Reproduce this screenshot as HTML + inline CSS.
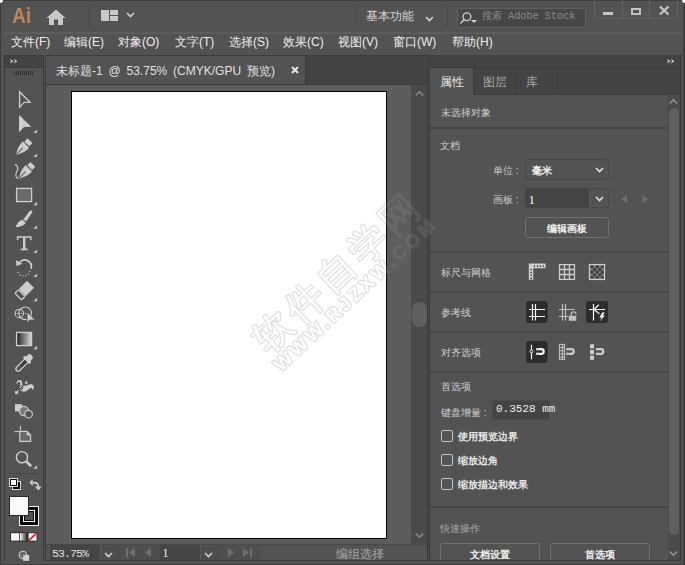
<!DOCTYPE html>
<html><head><meta charset="utf-8">
<style>
*{margin:0;padding:0;box-sizing:border-box}
html,body{width:685px;height:565px;overflow:hidden;background:#535353}
body{position:relative;font-family:"Liberation Sans",sans-serif;color:#d6d6d6}
.a{position:absolute}
.t{position:absolute;white-space:nowrap;line-height:1}
svg{position:absolute;overflow:visible}
</style></head><body>
<!-- window frame -->
<div class="a" style="left:0;top:0;width:685px;height:565px;background:#535353"></div>
<div class="a" style="left:0;top:0;width:1px;height:565px;background:#3d3d3d"></div>
<div class="a" style="left:0;top:0;width:685px;height:1px;background:#3d3d3d"></div>
<div class="a" style="left:0;top:0;width:3px;height:3px;background:#fff;border-bottom-right-radius:3px"></div>
<div class="a" style="left:683px;top:0;width:1px;height:565px;background:#464646"></div>
<div class="a" style="left:684px;top:0;width:1px;height:565px;background:#3a3a3a"></div>
<div class="a" style="left:682px;top:0;width:3px;height:3px;background:#fff;border-bottom-left-radius:3px"></div>
<div class="a" style="left:4px;top:32px;width:677px;height:2px;background:#5c5c5c"></div>

<!-- title bar -->
<div class="t" style="left:11.5px;top:5.5px;font-size:21.5px;font-weight:bold;color:#c08459;transform:scaleX(0.88);transform-origin:0 0">Ai</div>
<svg style="left:46px;top:9px" width="20" height="17" viewBox="0 0 20 17"><path d="M10 0.5 L19.5 9 L17 9 L17 16 L12 16 L12 10.5 L8 10.5 L8 16 L3 16 L3 9 L0.5 9 Z" fill="#c8c8c8"/></svg>
<div class="a" style="left:89px;top:7px;width:1px;height:20px;background:#484848"></div>
<div class="a" style="left:101px;top:10px;width:8px;height:11px;background:#c8c8c8"></div>
<div class="a" style="left:110px;top:10px;width:8px;height:5px;background:#c8c8c8"></div>
<div class="a" style="left:110px;top:16px;width:8px;height:5px;background:#c8c8c8"></div>
<svg style="left:126px;top:12px" width="9" height="6" viewBox="0 0 9 6"><path d="M1 1 L4.5 4.5 L8 1" stroke="#d0d0d0" stroke-width="1.6" fill="none"/></svg>
<div class="a" style="left:355px;top:7px;width:1px;height:20px;background:#484848"></div>
<div class="t" style="left:366px;top:10px;font-size:12px;color:#d8d8d8">基本功能</div>
<svg style="left:425px;top:15.5px" width="9" height="6" viewBox="0 0 9 6"><path d="M1 1 L4.5 4.5 L8 1" stroke="#d0d0d0" stroke-width="1.6" fill="none"/></svg>
<div class="a" style="left:447px;top:7px;width:1px;height:20px;background:#484848"></div>
<div class="a" style="left:456.5px;top:7.5px;width:129px;height:20px;background:#474747;border:1px solid #606060;border-radius:3px"></div>
<svg style="left:455px;top:5.5px" width="30" height="25" viewBox="0 0 30 25"><circle cx="11.9" cy="10.8" r="3.9" stroke="#cfcfcf" stroke-width="1.3" fill="none"/><path d="M9.2 13.6 L5.9 17" stroke="#cfcfcf" stroke-width="1.5" stroke-linecap="round"/><path d="M15.9 13.9 H22.1 L19 16.9 Z" fill="#cfcfcf"/></svg>
<div class="t" style="left:482px;top:12px;font-size:10.2px;color:#8c8c8c;font-family:'Liberation Mono',monospace">搜索 Adobe Stock</div>
<div class="a" style="left:594px;top:-3px;width:84px;height:22px;border:1px solid #626262;border-radius:0 0 4px 4px"></div>
<div class="a" style="left:622px;top:0;width:1px;height:19px;background:#626262"></div>
<div class="a" style="left:649px;top:0;width:1px;height:19px;background:#626262"></div>
<div class="a" style="left:603px;top:12px;width:10px;height:3px;background:#c4c4c4"></div>
<div class="a" style="left:631px;top:7.5px;width:10px;height:7.5px;border:2px solid #c4c4c4"></div>
<svg style="left:658.5px;top:5.5px" width="11" height="9" viewBox="0 0 11 9"><path d="M1 0.5 L9.5 8.5 M9.5 0.5 L1 8.5" stroke="#c4c4c4" stroke-width="2.4"/></svg>

<!-- menu bar -->
<div class="t" style="left:11px;top:36px;font-size:12px;color:#ededed">文件(F)</div>
<div class="t" style="left:64px;top:36px;font-size:12px;color:#ededed">编辑(E)</div>
<div class="t" style="left:118px;top:36px;font-size:12px;color:#ededed">对象(O)</div>
<div class="t" style="left:175px;top:36px;font-size:12px;color:#ededed">文字(T)</div>
<div class="t" style="left:229px;top:36px;font-size:12px;color:#ededed">选择(S)</div>
<div class="t" style="left:283px;top:36px;font-size:12px;color:#ededed">效果(C)</div>
<div class="t" style="left:338px;top:36px;font-size:12px;color:#ededed">视图(V)</div>
<div class="t" style="left:393px;top:36px;font-size:12px;color:#ededed">窗口(W)</div>
<div class="t" style="left:452px;top:36px;font-size:12px;color:#ededed">帮助(H)</div>

<!-- TOOLS PANEL -->
<div class="a" style="left:4px;top:55px;width:40px;height:506px;background:#535353;border:1px solid #3b3b3b;border-bottom:none"></div>
<div class="a" style="left:5px;top:56px;width:38px;height:11px;background:#434343"></div>
<div class="a" style="left:5px;top:67px;width:38px;height:1px;background:#3b3b3b"></div>
<svg style="left:9.8px;top:59.3px" width="8" height="6" viewBox="0 0 8 6"><path d="M0 0 L3.6 2.3 L0 4.6 L1.1 2.3 Z M3.9 0 L7.5 2.3 L3.9 4.6 L5 2.3 Z" fill="#d0d0d0"/></svg>
<svg style="left:14px;top:71px" width="20" height="4" viewBox="0 0 20 4"><path d="M0.5 0 V4 M2.5 0 V4 M4.5 0 V4 M6.5 0 V4 M8.5 0 V4 M10.5 0 V4 M12.5 0 V4 M14.5 0 V4 M16.5 0 V4 M18.5 0 V4" stroke="#2e2e2e" stroke-width="1"/></svg>

<svg style="left:0;top:0" width="48" height="565" viewBox="0 0 48 565">
<g fill="#cdcdcd">
<!-- flyout triangles -->
<path d="M37 129.5 V133 H33.5 Z"/>
<path d="M37 153.5 V157 H33.5 Z"/>
<path d="M37 201.7 V205.2 H33.5 Z"/>
<path d="M37 225.3 V228.8 H33.5 Z"/>
<path d="M37 249.5 V253 H33.5 Z"/>
<path d="M37 273.5 V277 H33.5 Z"/>
<path d="M37 297.8 V301.3 H33.5 Z"/>
<path d="M37 345.7 V349.2 H33.5 Z"/>
<path d="M37 465.3 V468.8 H33.5 Z"/>
</g>
<!-- selection -->
<path d="M19.6 91.8 L30 102.2 L24.2 102.4 L19.6 107.2 Z" fill="none" stroke="#cdcdcd" stroke-width="1.3" stroke-linejoin="miter"/>
<!-- direct selection -->
<path d="M19 115 L31.2 126.7 L24 127 L19 132.3 Z" fill="#cdcdcd"/>
<!-- pen -->
<g transform="translate(22.4,148.3) rotate(45) scale(1.08)">
<rect x="-3.2" y="-10" width="6.4" height="4.2" rx="0.6" fill="#cdcdcd"/>
<path d="M-4 -4.8 H4 C4.5 0 2.5 4 0 8.8 C-2.5 4 -4.5 0 -4 -4.8 Z" fill="#cdcdcd"/>
<path d="M0 -0.5 V8.8" stroke="#535353" stroke-width="0.9"/>
</g>
<!-- curvature -->
<g transform="translate(25.2,172) rotate(45) scale(1.08)">
<rect x="-3.2" y="-10" width="6.4" height="4.2" rx="0.6" fill="#cdcdcd"/>
<path d="M-4 -4.8 H4 C4.5 0 2.5 4 0 8.8 C-2.5 4 -4.5 0 -4 -4.8 Z" fill="#cdcdcd"/>
<path d="M0 -0.5 V8.8" stroke="#535353" stroke-width="0.9"/>
</g>
<path d="M15 164.2 C18 166 18.5 168 17 171 C15 174.5 15.5 177.5 18.2 178.6" fill="none" stroke="#cdcdcd" stroke-width="1.2"/>
<!-- rectangle -->
<rect x="16.6" y="188.4" width="15" height="13.2" fill="#6a6a6a" stroke="#cdcdcd" stroke-width="1.3"/>
<!-- brush -->
<path d="M30.2 210.6 C31.6 210 32.8 211.2 32.2 212.6 L26.2 221.6 L23.4 219.2 Z" fill="#cdcdcd"/>
<path d="M22.6 219.8 L25.6 222.4 C24.6 225.2 21 226.8 15.6 227.2 C17 223.4 19 220.6 22.6 219.8 Z" fill="#cdcdcd"/>
<!-- type -->
<path d="M16.8 236.2 H31.6 V240.2 H30.2 V237.8 H25.4 V248.6 H27.6 V250.2 H20.8 V248.6 H23 V237.8 H18.2 V240.2 H16.8 Z" fill="#cdcdcd"/>
<!-- rotate -->
<path d="M19.9 262.2 A6.6 6.6 0 0 1 31 268.8" fill="none" stroke="#cdcdcd" stroke-width="1.8"/>
<path d="M15.9 260 L22.4 263.8 L16.5 266 Z" fill="#cdcdcd"/>
<path d="M30.2 270.8 A6.6 6.6 0 0 1 17.2 270" fill="none" stroke="#cdcdcd" stroke-width="1.3" stroke-dasharray="1.1 1.9"/>
<!-- eraser -->
<g transform="translate(24.3,290.5) rotate(45)">
<rect x="-5" y="-8.8" width="10" height="11.6" fill="#cdcdcd"/>
<rect x="-4.6" y="3.6" width="9.2" height="5" rx="0.8" fill="none" stroke="#cdcdcd" stroke-width="1.3"/>
</g>
<!-- shape builder -->
<circle cx="19.3" cy="313.4" r="4.2" fill="none" stroke="#cdcdcd" stroke-width="1.1"/>
<circle cx="25.2" cy="313.3" r="6.3" fill="none" stroke="#cdcdcd" stroke-width="1.1"/>
<g fill="#dcdcdc"><circle cx="17.1" cy="313.4" r="0.6"/><circle cx="19.3" cy="313.4" r="0.6"/><circle cx="21.5" cy="313.4" r="0.6"/><circle cx="23.7" cy="313.4" r="0.6"/><circle cx="25.6" cy="313.4" r="0.6"/></g>
<path d="M27 311.6 L35.4 320 L29.8 320.2 L27 323.4 Z" fill="#cdcdcd" stroke="#535353" stroke-width="1"/>
<!-- gradient -->
<defs><linearGradient id="gr" x1="0" x2="1"><stop offset="0" stop-color="#1e1e1e"/><stop offset="1" stop-color="#dadada"/></linearGradient></defs>
<rect x="16.6" y="332.4" width="15" height="13.2" fill="url(#gr)" stroke="#cdcdcd" stroke-width="1.3"/>
<!-- eyedropper -->
<g transform="translate(24,363) rotate(45)">
<rect x="-3.2" y="-10.8" width="6.4" height="6.6" rx="2.6" fill="#cdcdcd"/>
<rect x="-4.6" y="-6" width="9.2" height="3.2" rx="1" fill="#cdcdcd"/>
<path d="M-2.3 -3.2 V8.2 A2.3 2.3 0 0 0 2.3 8.2 V-3.2" fill="none" stroke="#cdcdcd" stroke-width="1.3"/>
<path d="M-1.6 -2.2 H1.6 M-1.6 -0.4 H1.6 M-1.6 1.4 H1.6 M-1.6 3.2 H1.6" stroke="#2e2e2e" stroke-width="1"/>
</g>
<!-- puppet warp -->
<path d="M16.3 392.6 L26.8 382.4" stroke="#cdcdcd" stroke-width="1"/>
<path d="M16.9 384.6 C16 382.4 16.9 380.2 19 379.9 C21.3 379.7 22.6 381.6 22.2 384 C22 385 22.6 385.6 24 385.8 C25.6 386 26.8 385.4 28.2 384.8 C30.6 383.8 33 384 33.8 386.2 C34.2 387.8 33.6 389.4 32.6 390 C32.5 388.6 31.8 387.6 30.6 388 C28.6 388.8 27.6 391.4 24 391.6 C21.2 391.8 19.4 390.4 19.4 387.8 C19.4 386.2 20.2 384.6 20.2 383.2 C20.2 382 19.4 381.6 18.6 382 C17.8 382.4 17.4 383.4 16.9 384.6 Z" fill="#cdcdcd"/>
<path d="M19.4 389.6 L25.2 383.9" stroke="#3e3e3e" stroke-width="0.9"/>
<circle cx="20.8" cy="387.7" r="1.9" fill="none" stroke="#3e3e3e" stroke-width="0.9"/>
<rect x="15.3" y="391.3" width="2.6" height="2.5" fill="#cdcdcd" stroke="#cdcdcd" stroke-width="0.6"/>
<circle cx="26.4" cy="382.6" r="1.4" fill="#cdcdcd"/>
<circle cx="26.4" cy="382.8" r="0.5" fill="#555"/>
<!-- live paint -->
<rect x="15" y="404.2" width="7.2" height="7.2" fill="#cdcdcd"/>
<circle cx="24" cy="411" r="4.6" fill="#7a7a7a" stroke="#cdcdcd" stroke-width="1.2"/>
<circle cx="28.6" cy="414.2" r="3.8" fill="#535353" stroke="#cdcdcd" stroke-width="1.2"/>
<!-- artboard -->
<path d="M14.2 431.6 H23 M20.4 425.8 V434.2" stroke="#cdcdcd" stroke-width="1"/>
<path d="M19.8 431.4 H27 L30.6 435 V441.4 H19.8 Z" fill="#6a6a6a" stroke="#cdcdcd" stroke-width="1.2"/>
<path d="M26.6 431.4 V435.4 H30.6 Z" fill="#cdcdcd"/>
<!-- zoom -->
<circle cx="22" cy="457.2" r="5.6" fill="none" stroke="#cdcdcd" stroke-width="1.4"/>
<path d="M26 461.2 L31.2 466.2" stroke="#cdcdcd" stroke-width="2.6"/>
<!-- separator -->
<rect x="9" y="473" width="30" height="1" fill="#474747"/>
<!-- default fill stroke -->
<rect x="12" y="481" width="9" height="9" fill="#e0e0e0"/>
<rect x="13" y="482" width="7" height="7" fill="#000"/>
<rect x="15" y="486" width="3" height="1" fill="#c8c8c8"/><rect x="17" y="484" width="1" height="3" fill="#c8c8c8"/>
<rect x="9" y="478" width="9" height="9" fill="#e0e0e0"/>
<rect x="10" y="479" width="7" height="7" fill="#000"/>
<rect x="11" y="480" width="5" height="5" fill="#fff"/>
<!-- swap arrow -->
<path d="M31.5 482.6 H34 C37 482.6 38.4 484.4 38.4 487" fill="none" stroke="#cdcdcd" stroke-width="1.6"/>
<path d="M32.6 479.2 L29.4 482.6 L32.6 486 Z M35 486.6 L41.6 486.6 L38.4 490.6 Z" fill="#cdcdcd"/>
<!-- stroke square -->
<rect x="19" y="506" width="20" height="20" fill="#f2f2f2"/>
<rect x="20" y="507" width="18" height="18" fill="#0c0c0c"/>
<rect x="23" y="510" width="12" height="12" fill="#f2f2f2"/>
<rect x="24" y="511" width="10" height="10" fill="#0c0c0c"/>
<rect x="25" y="512" width="8" height="8" fill="#535353"/>
<!-- fill square -->
<rect x="9.5" y="496.5" width="19" height="19" fill="#fafafa" stroke="#2a2a2a" stroke-width="1"/>
<!-- color mode -->
<rect x="10" y="532.2" width="27.6" height="9.4" fill="#2e2e2e"/>
<rect x="11" y="533.2" width="8" height="7.4" fill="#f8f8f8"/>
<defs><linearGradient id="gr2" x1="0" x2="1"><stop offset="0" stop-color="#ffffff"/><stop offset="1" stop-color="#1a1a1a"/></linearGradient></defs>
<rect x="19.8" y="533.2" width="8" height="7.4" fill="url(#gr2)"/>
<rect x="28.6" y="533.2" width="8" height="7.4" fill="#f8f8f8"/>
<path d="M28.6 540.6 L36.6 533.2" stroke="#ee1c24" stroke-width="1.8"/>
<!-- draw mode -->
<circle cx="23" cy="554.9" r="3.7" fill="#666" stroke="#cdcdcd" stroke-width="1.1"/>
<rect x="23.2" y="555" width="6" height="5.8" fill="#cdcdcd"/>
</svg>
<!-- DOC WINDOW -->
<div class="a" style="left:45px;top:55px;width:385px;height:506px;background:#3b3b3b"></div>
<div class="a" style="left:46px;top:56px;width:381px;height:28px;background:#434343"></div>
<div class="a" style="left:46px;top:56px;width:259px;height:28px;background:#535353"></div>
<div class="a" style="left:305px;top:56px;width:1px;height:28px;background:#3b3b3b"></div>
<div class="t" style="left:56px;top:65px;font-size:12px;word-spacing:2.5px;color:#e0e0e0">未标题-1 @ 53.75% (CMYK/GPU 预览)</div>
<svg style="left:291px;top:66px" width="8" height="8" viewBox="0 0 8 8"><path d="M1 1 L7 7 M7 1 L1 7" stroke="#e6e6e6" stroke-width="2"/></svg>
<div class="a" style="left:46px;top:85px;width:365px;height:459px;background:#5d5d5d"></div>
<div class="a" style="left:411px;top:85px;width:16px;height:459px;background:#4a4a4a"></div>
<div class="a" style="left:428px;top:55px;width:1px;height:506px;background:#474747"></div>
<svg style="left:415px;top:91px" width="9" height="5" viewBox="0 0 9 5"><path d="M0.8 4.5 L4.5 0.8 L8.2 4.5" stroke="#8a8a8a" stroke-width="1.5" fill="none"/></svg>
<svg style="left:415px;top:533px" width="9" height="5" viewBox="0 0 9 5"><path d="M0.8 0.5 L4.5 4.2 L8.2 0.5" stroke="#8a8a8a" stroke-width="1.5" fill="none"/></svg>
<div class="a" style="left:412px;top:302px;width:15px;height:25px;background:#5f5f5f;border-radius:7px"></div>
<div class="a" style="left:71px;top:91px;width:316px;height:448px;background:#fff;border:1px solid #000"></div>
<div class="a" style="left:46px;top:544px;width:381px;height:16px;background:#535353"></div>
<div class="a" style="left:46px;top:544px;width:381px;height:1px;background:#484848"></div>
<div class="a" style="left:50px;top:545px;width:50px;height:15px;background:#454545;border-radius:2px 0 0 0"></div>
<div class="t" style="left:52px;top:547.5px;font-size:11.5px;letter-spacing:-0.9px;color:#e0e0e0;font-family:'Liberation Mono',monospace">53.75%</div>
<div class="a" style="left:100px;top:545px;width:18px;height:15px;background:#4e4e4e;border-left:1px solid #5c5c5c;border-top:1px solid #555;border-radius:0 2px 0 0"></div>
<svg style="left:104px;top:552px" width="9" height="6" viewBox="0 0 9 6"><path d="M1 1 L4.5 4.5 L8 1" stroke="#d0d0d0" stroke-width="1.6" fill="none"/></svg>
<div class="a" style="left:118px;top:544px;width:42px;height:16px;background:#4f4f4f;border:1px solid #4a4a4a;border-bottom:none"></div>
<svg style="left:126px;top:548px" width="26" height="9" viewBox="0 0 26 9"><path d="M0 0 H2 V9 H0 Z M9 0 V9 L3 4.5 Z M25 0 V9 L19 4.5 Z" fill="#6e6e6e"/></svg>
<div class="a" style="left:160px;top:545px;width:41px;height:15px;background:#454545;border-radius:2px 0 0 0"></div>
<div class="t" style="left:162.5px;top:547px;font-size:12px;color:#f2f2f2;font-family:'Liberation Serif',serif">1</div>
<div class="a" style="left:200px;top:545px;width:18px;height:15px;background:#4e4e4e;border-left:1px solid #5c5c5c;border-top:1px solid #555;border-radius:0 2px 0 0"></div>
<svg style="left:204px;top:552px" width="9" height="6" viewBox="0 0 9 6"><path d="M1 1 L4.5 4.5 L8 1" stroke="#d0d0d0" stroke-width="1.6" fill="none"/></svg>
<div class="a" style="left:218px;top:544px;width:42px;height:16px;background:#4f4f4f;border:1px solid #4a4a4a;border-bottom:none"></div>
<svg style="left:228px;top:548px" width="24" height="9" viewBox="0 0 24 9"><path d="M0 0 V9 L6 4.5 Z M15 0 V9 L21 4.5 Z M22 0 H24 V9 H22 Z" fill="#6e6e6e"/></svg>
<div class="t" style="left:336px;top:548px;font-size:12px;color:#aaaaaa">编组选择</div>

<!-- RIGHT PANEL -->
<div class="a" style="left:429px;top:55px;width:1px;height:506px;background:#3b3b3b"></div>
<div class="a" style="left:430px;top:55px;width:251px;height:506px;background:#535353"></div>
<div class="a" style="left:430px;top:55px;width:251px;height:12px;background:#434343"></div>
<div class="a" style="left:430px;top:67px;width:251px;height:1px;background:#3b3b3b"></div>
<svg style="left:666.7px;top:59.3px" width="8" height="6" viewBox="0 0 8 6"><path d="M0 0 L3.6 2.3 L0 4.6 L1.1 2.3 Z M3.9 0 L7.5 2.3 L3.9 4.6 L5 2.3 Z" fill="#d0d0d0"/></svg>
<div class="a" style="left:430px;top:68px;width:251px;height:27px;background:#434343"></div>
<div class="a" style="left:430px;top:94px;width:251px;height:1px;background:#3e3e3e"></div>
<div class="a" style="left:430px;top:68px;width:43px;height:27px;background:#535353"></div>
<div class="a" style="left:473px;top:68px;width:1px;height:27px;background:#3b3b3b"></div>
<div class="a" style="left:516px;top:68px;width:1px;height:27px;background:#3b3b3b"></div>
<div class="a" style="left:557px;top:68px;width:1px;height:27px;background:#3b3b3b"></div>
<div class="t" style="left:440px;top:76px;font-size:12px;color:#e8e8e8">属性</div>
<div class="t" style="left:483px;top:76px;font-size:12px;color:#a8a8a8">图层</div>
<div class="t" style="left:526px;top:76px;font-size:12px;color:#a8a8a8">库</div>
<!-- scrollbar -->
<div class="a" style="left:668px;top:95px;width:12px;height:465px;background:#4b4b4b"></div>
<svg style="left:669px;top:99px" width="9" height="5" viewBox="0 0 9 5"><path d="M0.8 4.5 L4.5 0.8 L8.2 4.5" stroke="#9a9a9a" stroke-width="1.4" fill="none"/></svg>
<div class="a" style="left:669px;top:108px;width:10px;height:427px;background:#606060;border-radius:5px"></div>
<svg style="left:669px;top:551px" width="9" height="5" viewBox="0 0 9 5"><path d="M0.8 0.5 L4.5 4.2 L8.2 0.5" stroke="#9a9a9a" stroke-width="1.4" fill="none"/></svg>
<div class="a" style="left:680px;top:55px;width:1px;height:506px;background:#3b3b3b"></div>
<div class="a" style="left:430px;top:560px;width:251px;height:1px;background:#3b3b3b"></div>
<!-- dividers -->
<div class="a" style="left:430px;top:127px;width:238px;height:2px;background:#474747"></div>
<div class="a" style="left:430px;top:251px;width:238px;height:2px;background:#474747"></div>
<div class="a" style="left:430px;top:291px;width:238px;height:2px;background:#474747"></div>
<div class="a" style="left:430px;top:331px;width:238px;height:2px;background:#474747"></div>
<div class="a" style="left:430px;top:371px;width:238px;height:2px;background:#474747"></div>
<div class="a" style="left:430px;top:506px;width:238px;height:2px;background:#474747"></div>
<!-- texts -->
<div class="t" style="left:441px;top:108px;font-size:10px;color:#cfcfcf">未选择对象</div>
<div class="t" style="left:440px;top:141px;font-size:10px;color:#cfcfcf">文档</div>
<div class="t" style="left:493px;top:166px;font-size:10px;color:#cfcfcf">单位 :</div>
<div class="a" style="left:525px;top:159px;width:84px;height:21px;background:#535353;border:1px solid #474747;border-radius:3px"></div>
<div class="t" style="left:532px;top:166px;font-size:10px;color:#f0f0f0;font-weight:bold">毫米</div>
<svg style="left:595px;top:167px" width="9" height="6" viewBox="0 0 9 6"><path d="M1 1 L4.5 4.5 L8 1" stroke="#e0e0e0" stroke-width="1.6" fill="none"/></svg>
<div class="t" style="left:493px;top:195px;font-size:10px;color:#cfcfcf">画板 :</div>
<div class="a" style="left:525px;top:188px;width:84px;height:20px;background:#535353;border:1px solid #474747;border-radius:3px"></div>
<div class="a" style="left:526px;top:189px;width:64px;height:18px;background:#444444;border-right:1px solid #585858"></div>
<div class="t" style="left:528.5px;top:192.5px;font-size:13px;color:#f2f2f2;font-family:'Liberation Serif',serif">1</div>
<svg style="left:595px;top:196px" width="9" height="6" viewBox="0 0 9 6"><path d="M1 1 L4.5 4.5 L8 1" stroke="#e0e0e0" stroke-width="1.6" fill="none"/></svg>
<svg style="left:621px;top:195px" width="28" height="9" viewBox="0 0 28 9"><path d="M6 0 V8.5 L0.5 4.25 Z M21.5 0 V8.5 L27 4.25 Z" fill="#707070"/></svg>
<div class="a" style="left:525px;top:217px;width:84px;height:21px;border:1px solid #707070;border-radius:3px"></div>
<div class="t" style="left:547px;top:223.5px;font-size:10px;color:#f0f0f0;font-weight:bold">编辑画板</div>
<div class="t" style="left:441px;top:268px;font-size:10px;color:#cfcfcf">标尺与网格</div>
<div class="t" style="left:441px;top:308px;font-size:10px;color:#cfcfcf">参考线</div>
<div class="t" style="left:441px;top:348px;font-size:10px;color:#cfcfcf">对齐选项</div>
<div class="t" style="left:441px;top:382px;font-size:10px;color:#cfcfcf">首选项</div>
<div class="t" style="left:441px;top:408px;font-size:10px;color:#cfcfcf">键盘增量 :</div>
<div class="a" style="left:492px;top:400px;width:58px;height:20px;background:#444444;border:1px solid #4c4c4c;border-radius:3px"></div>
<div class="t" style="left:496px;top:404px;font-size:11px;color:#f0f0f0;font-family:'Liberation Mono',monospace">0.3528 mm</div>
<div class="a" style="left:441px;top:430px;width:12px;height:12px;border:1px solid #c4c4c4;border-radius:2px"></div>
<div class="a" style="left:441px;top:454px;width:12px;height:12px;border:1px solid #c4c4c4;border-radius:2px"></div>
<div class="a" style="left:441px;top:478px;width:12px;height:12px;border:1px solid #c4c4c4;border-radius:2px"></div>
<div class="t" style="left:458px;top:432px;font-size:10px;color:#e8e8e8;font-weight:bold">使用预览边界</div>
<div class="t" style="left:458px;top:456px;font-size:10px;color:#e8e8e8;font-weight:bold">缩放边角</div>
<div class="t" style="left:458px;top:480px;font-size:10px;color:#e8e8e8;font-weight:bold">缩放描边和效果</div>
<div class="t" style="left:440px;top:523.5px;font-size:10px;color:#a8a8a8">快速操作</div>
<div class="a" style="left:440px;top:543px;width:100px;height:25px;border:1px solid #707070;border-radius:3px"></div>
<div class="a" style="left:550px;top:543px;width:100px;height:25px;border:1px solid #707070;border-radius:3px"></div>
<div class="t" style="left:470px;top:549.5px;font-size:10px;color:#f0f0f0;font-weight:bold">文档设置</div>
<div class="t" style="left:585px;top:549.5px;font-size:10px;color:#f0f0f0;font-weight:bold">首选项</div>
<div class="a" style="left:430px;top:560px;width:251px;height:5px;background:#535353"></div>
<div class="a" style="left:430px;top:560px;width:251px;height:1px;background:#3b3b3b"></div>

<svg style="left:0;top:0" width="685" height="565" viewBox="0 0 685 565">
<!-- ruler -->
<path d="M528.8 263.5 H545.6 V268.3 H533.3 V279.8 H528.8 Z" fill="#cdcdcd"/><rect x="533.9" y="265.4" width="1.2" height="1.6" fill="#3a3a3a"/><rect x="536.9" y="265.4" width="1.2" height="1.6" fill="#3a3a3a"/><rect x="539.8" y="265.4" width="1.2" height="1.6" fill="#3a3a3a"/><rect x="542.7" y="265.4" width="1.2" height="1.6" fill="#3a3a3a"/><rect x="530.4" y="269.0" width="1.6" height="1.2" fill="#3a3a3a"/><rect x="530.4" y="271.9" width="1.6" height="1.2" fill="#3a3a3a"/><rect x="530.4" y="274.7" width="1.6" height="1.2" fill="#3a3a3a"/><rect x="530.4" y="277.8" width="1.6" height="1.2" fill="#3a3a3a"/>

<!-- grid -->
<path d="M559.5 264.6 H574.5 V279.4 H559.5 Z M564.5 264.6 V279.4 M569.5 264.6 V279.4 M559.5 269.5 H574.5 M559.5 274.5 H574.5" fill="none" stroke="#cdcdcd" stroke-width="1.3"/>
<!-- transparency grid -->
<rect x="590.20" y="265.30" width="2.8" height="2.8" fill="#3e3e3e"/><rect x="590.20" y="268.10" width="2.8" height="2.8" fill="#767676"/><rect x="590.20" y="270.90" width="2.8" height="2.8" fill="#3e3e3e"/><rect x="590.20" y="273.70" width="2.8" height="2.8" fill="#767676"/><rect x="590.20" y="276.50" width="2.8" height="2.8" fill="#3e3e3e"/><rect x="593.00" y="265.30" width="2.8" height="2.8" fill="#767676"/><rect x="593.00" y="268.10" width="2.8" height="2.8" fill="#3e3e3e"/><rect x="593.00" y="270.90" width="2.8" height="2.8" fill="#767676"/><rect x="593.00" y="273.70" width="2.8" height="2.8" fill="#3e3e3e"/><rect x="593.00" y="276.50" width="2.8" height="2.8" fill="#767676"/><rect x="595.80" y="265.30" width="2.8" height="2.8" fill="#3e3e3e"/><rect x="595.80" y="268.10" width="2.8" height="2.8" fill="#767676"/><rect x="595.80" y="270.90" width="2.8" height="2.8" fill="#3e3e3e"/><rect x="595.80" y="273.70" width="2.8" height="2.8" fill="#767676"/><rect x="595.80" y="276.50" width="2.8" height="2.8" fill="#3e3e3e"/><rect x="598.60" y="265.30" width="2.8" height="2.8" fill="#767676"/><rect x="598.60" y="268.10" width="2.8" height="2.8" fill="#3e3e3e"/><rect x="598.60" y="270.90" width="2.8" height="2.8" fill="#767676"/><rect x="598.60" y="273.70" width="2.8" height="2.8" fill="#3e3e3e"/><rect x="598.60" y="276.50" width="2.8" height="2.8" fill="#767676"/><rect x="601.40" y="265.30" width="2.8" height="2.8" fill="#3e3e3e"/><rect x="601.40" y="268.10" width="2.8" height="2.8" fill="#767676"/><rect x="601.40" y="270.90" width="2.8" height="2.8" fill="#3e3e3e"/><rect x="601.40" y="273.70" width="2.8" height="2.8" fill="#767676"/><rect x="601.40" y="276.50" width="2.8" height="2.8" fill="#3e3e3e"/>
<rect x="589.5" y="264.6" width="15" height="14.8" fill="none" stroke="#cdcdcd" stroke-width="1.3"/>
<!-- guides button -->
<rect x="526.2" y="301" width="21.4" height="21.9" rx="2.5" fill="#2c2c2c"/>
<path d="M532.5 304 V320.5 M535.5 304 V320.5 M529 309.5 H545 M529 316.5 H545" stroke="#f4f4f4" stroke-width="1.2"/>
<!-- lock guides -->
<path d="M562.5 304 V320.5 M565.5 304 V320.5 M559 309.5 H574.6 M559 316.5 H568.4" stroke="#bdbdbd" stroke-width="1.2"/>
<path d="M571.2 316 V314.2 A2.4 2.4 0 0 1 576 314.2" fill="none" stroke="#bdbdbd" stroke-width="1.3"/>
<rect x="568.8" y="315.8" width="7.4" height="5" fill="#bdbdbd"/>
<!-- smart guides button -->
<rect x="586.1" y="301" width="22" height="21.9" rx="2.5" fill="#2c2c2c"/>
<path d="M593.5 304 V320.5 M589 309.5 H605 M594 309.5 L598.8 304.8 M594 309.5 L599.4 313.8" stroke="#f4f4f4" stroke-width="1.2" fill="none"/>
<path d="M602.2 312.4 L599.4 317.4 L601.8 317.4 L599.8 321.2 L605 315.6 L602.6 315.6 L605 312.4 Z" fill="#f4f4f4"/>
<!-- snap button -->
<rect x="526.2" y="341" width="21.4" height="22" rx="2.5" fill="#2c2c2c"/>
<path d="M531.5 344.8 V349.9 M531.5 353.1 V359.2" stroke="#f4f4f4" stroke-width="1.2"/>
<circle cx="531.5" cy="351.5" r="1.5" fill="none" stroke="#f4f4f4" stroke-width="1"/>
<path d="M538.4 349.2 H541.4 A2.3 2.3 0 0 1 541.4 353.8 H538.4" fill="none" stroke="#f4f4f4" stroke-width="2.2"/>
<rect x="536.2" y="348.1" width="2.2" height="2.2" fill="#f4f4f4"/><rect x="536.2" y="352.7" width="2.2" height="2.2" fill="#f4f4f4"/>
<!-- snap pixel -->
<path d="M559.4 344.4 V359.6 M562.4 344.4 V359.6 M559.4 344.4 H565 M559.4 347.6 H565 M559.4 350.8 H565 M559.4 354 H565 M559.4 357.2 H565 M559.4 359.4 H565 M564.6 344.4 V359.6" fill="none" stroke="#cdcdcd" stroke-width="0.9"/>
<path d="M568.4 349.2 H571.4 A2.3 2.3 0 0 1 571.4 353.8 H568.4" fill="none" stroke="#cdcdcd" stroke-width="2.2"/>
<rect x="566.2" y="348.1" width="2.2" height="2.2" fill="#cdcdcd"/><rect x="566.2" y="352.7" width="2.2" height="2.2" fill="#cdcdcd"/>
<!-- snap glyph -->
<rect x="590" y="344.2" width="4" height="4.2" fill="#cdcdcd"/><rect x="590" y="350" width="4" height="4.2" fill="#cdcdcd"/><rect x="590" y="355.6" width="4" height="4.2" fill="#cdcdcd"/>
<path d="M598 349.2 H601 A2.3 2.3 0 0 1 601 353.8 H598" fill="none" stroke="#cdcdcd" stroke-width="2.2"/>
<rect x="595.8" y="348.1" width="2.2" height="2.2" fill="#cdcdcd"/><rect x="595.8" y="352.7" width="2.2" height="2.2" fill="#cdcdcd"/>
</svg>
<svg style="left:0;top:0" width="685" height="565" viewBox="0 0 685 565">
<defs><clipPath id="abc"><rect x="72" y="92" width="314" height="446"/></clipPath></defs>
<g transform="rotate(-43 331.4 276.1)" font-family="'Liberation Sans',sans-serif" fill="none" stroke="rgba(110,110,110,0.24)" stroke-width="2.6" stroke-linejoin="round"><text x="337" y="290" text-anchor="middle" font-size="38" textLength="210" lengthAdjust="spacing">软件自学网</text><text x="335" y="312" text-anchor="middle" font-size="19" font-weight="bold" textLength="212" lengthAdjust="spacing">WWW.RJZXW.COM</text></g>
<g clip-path="url(#abc)"><g transform="rotate(-43 331.4 276.1)" font-family="'Liberation Sans',sans-serif" fill="#fff"><text x="337" y="290" text-anchor="middle" font-size="38" textLength="210" lengthAdjust="spacing">软件自学网</text><text x="335" y="312" text-anchor="middle" font-size="19" font-weight="bold" textLength="212" lengthAdjust="spacing">WWW.RJZXW.COM</text></g></g>
<g transform="rotate(-43 331.4 276.1)" font-family="'Liberation Sans',sans-serif" fill="rgba(255,255,255,0.08)"><text x="337" y="290" text-anchor="middle" font-size="38" textLength="210" lengthAdjust="spacing">软件自学网</text><text x="335" y="312" text-anchor="middle" font-size="19" font-weight="bold" textLength="212" lengthAdjust="spacing">WWW.RJZXW.COM</text></g>
</svg>
<div class="a" style="left:0;top:564px;width:685px;height:1px;background:#3d3d3d"></div>
</body></html>
